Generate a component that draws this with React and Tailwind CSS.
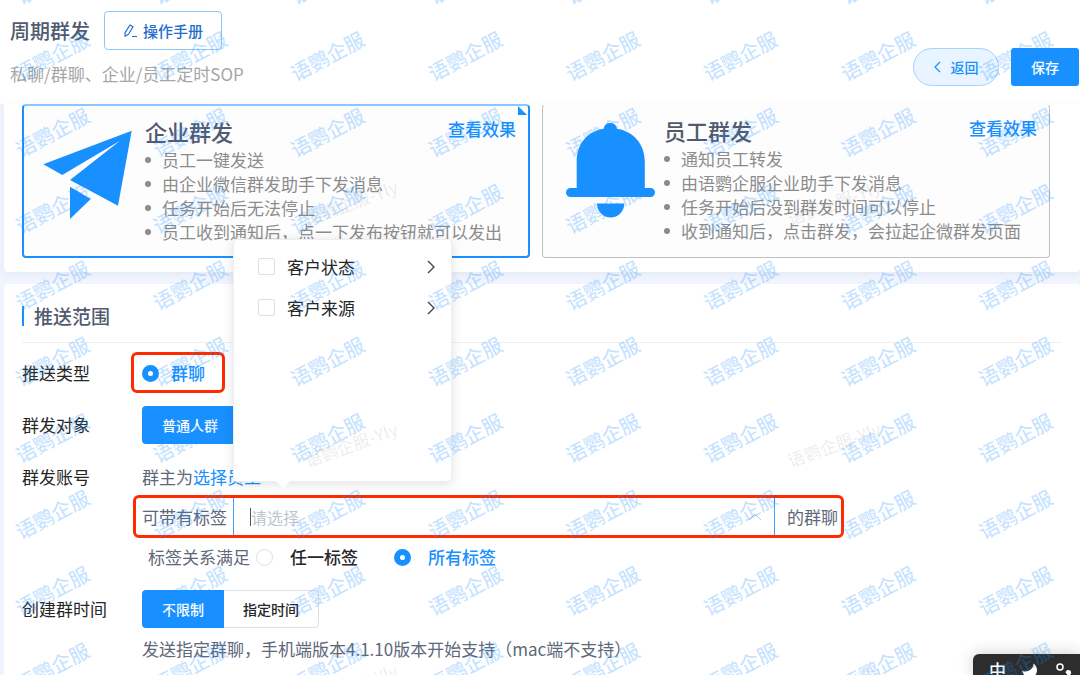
const plans = [
  {
    title: "企业群发",
    icon: "plane",
    active: true,
    points: ["员工一键发送", "由企业微信群发助手下发消息", "任务开始后无法停止", "员工收到通知后，点一下发布按钮就可以发出"],
  },
  {
    title: "员工群发",
    icon: "bell",
    active: false,
    points: ["通知员工转发", "由语鹦企服企业助手下发消息", "任务开始后没到群发时间可以停止", "收到通知后，点击群发，会拉起企微群发页面"],
  },
];

const filters = ["客户状态", "客户来源"];

function PlaneIcon() {
  return (
    <svg width="94" height="104" viewBox="0 0 94 104" className="shrink-0 fill-[#1890ff]" aria-hidden="true">
      <path d="M89.7 12.7 1.3 46.3l19 10.7L78 22.7 28 62l48 25.7z" />
      <path d="M28 68.7 48.7 81 28 101z" />
    </svg>
  );
}

function BellIcon() {
  return (
    <svg width="94" height="104" viewBox="0 0 94 104" className="shrink-0 fill-[#1890ff]" aria-hidden="true">
      <path d="M42.6 11.7a6.8 6.8 0 0 1 13.4 0C72 14 83.800 27 83.800 44v27H89.500a4.500 4.500 0 0 1 0 9H9.500a4.500 4.500 0 0 1 0-9H15.700V44c0-17 11-30 26.900-32.300z" />
      <path d="M36 86.500h27.300a13.650 14 0 0 1-27.300 0z" />
    </svg>
  );
}

function PlanCard({ plan }) {
  return (
    <section
      className={`relative flex gap-[9px] rounded bg-[#fdfdfe] pl-[18px] pr-3 py-3 ${
        plan.active ? "border-2 border-[#1890ff] border-t-[#8cc6ff]" : "border border-[#bfbfbf] border-t-transparent"
      }`}
    >
      {plan.icon === "plane" ? <PlaneIcon /> : <BellIcon />}
      <div className="flex-1 min-w-0">
        <h2 className="mb-1 text-[22px] leading-[26px] font-medium text-[#515a6e]">{plan.title}</h2>
        <ul className="text-[17px] leading-6 text-[#8c8c8c] whitespace-nowrap">
          {plan.points.map((p) => (
            <li key={p} className="flex items-center gap-[11px]">
              <span className="w-1.5 h-1.5 rounded-full bg-[#8c8c8c]" />
              {p}
            </li>
          ))}
        </ul>
      </div>
      <a href="#preview" className="absolute top-[11px] right-3 text-[17px] leading-6 font-medium text-[#1890ff]">
        查看效果
      </a>
      {plan.active && (
        <svg width="10" height="9" viewBox="0 0 10 9" className="absolute top-0 right-0 fill-[#1890ff]" aria-hidden="true">
          <path d="M0 0l9 9H0z" />
        </svg>
      )}
    </section>
  );
}

function Row({ label, children }) {
  return (
    <div className="flex">
      <div className="w-[120px] shrink-0 h-[38px] flex items-center text-[#262626]">{label}</div>
      <div className="flex-1 min-w-0 flex flex-col gap-[2px]">{children}</div>
    </div>
  );
}

function Radio({ label, name, checked, className }) {
  return (
    <label className={`flex items-center ${className}`}>
      <input
        type="radio"
        name={name}
        defaultChecked={checked}
        className="appearance-none w-[17px] h-[17px] rounded-full border border-[#dcdfe6] bg-white checked:border-[6px] checked:border-[#1890ff]"
      />
      {label}
    </label>
  );
}

function Highlight({ className }) {
  return <span className={`absolute border-[3px] border-[#ff2a00] rounded-md pointer-events-none ${className}`} />;
}

function FilterPopup() {
  return (
    <div className="absolute z-10 -left-px bottom-[54px] w-[219px] h-[243px] pt-1.5 bg-white border border-[#ebeef5] rounded-sm shadow-[0_2px_12px_rgba(0,0,0,0.12)]">
      {filters.map((f) => (
        <div key={f} className="h-[41px] pl-6 pr-4 flex items-center justify-between text-[#262626]">
          <label className="flex items-center gap-3">
            <input type="checkbox" className="appearance-none w-[17px] h-[17px] rounded-xs border border-[#dcdfe6] bg-white" />
            {f}
          </label>
          <svg width="8" height="14" viewBox="0 0 8 14" fill="none" stroke="#444" strokeWidth="1.4" aria-hidden="true">
            <path d="M1 1l6 6-6 6" />
          </svg>
        </div>
      ))}
      <svg width="14" height="7" viewBox="0 0 14 7" className="absolute top-full left-[42px] fill-white" aria-hidden="true">
        <path d="M0 0h14L7 7z" />
      </svg>
    </div>
  );
}

function Watermark() {
  const marks = [];
  for (let r = 0; r < 10; r++) {
    for (let c = 0; c < 8; c++) {
      marks.push([52 + c * 137.6, -21 + r * 76.4]);
    }
  }
  const users = [];
  for (let r = 0; r < 3; r++) {
    for (let c = 0; c < 2; c++) {
      users.push([351 + c * 483, 202 + r * 242]);
    }
  }
  return (
    <svg className="absolute inset-0 z-30 w-full h-full pointer-events-none" aria-hidden="true">
      {users.map(([x, y]) => (
        <text key={`${x}-${y}`} transform={`translate(${x} ${y}) rotate(-20)`} textAnchor="middle" dominantBaseline="central" className="text-[17px] font-medium fill-black/8">
          语鹦企服-Yly
        </text>
      ))}
      {marks.map(([x, y]) => (
        <text key={`${x}-${y}`} transform={`translate(${x} ${y}) rotate(-28)`} textAnchor="middle" dominantBaseline="central" className="text-[20px] font-medium fill-[#1890ff]/25">
          语鹦企服
        </text>
      ))}
    </svg>
  );
}

function InputMethodBar() {
  return (
    <div className="absolute z-20 right-0 bottom-0 w-[107px] h-[21px] pl-4 flex gap-4 overflow-hidden bg-[#2d2d2d] rounded-tl-md text-white shadow-[0_0_16px_rgba(0,0,0,0.2)]">
      <span className="text-[17px] leading-8 font-medium">中</span>
      <svg width="18" height="21" viewBox="0 0 18 21" className="fill-white" aria-hidden="true">
        <path d="M11.500 9.500c4 3 4.500 8 2 11.500H2l-2-4c5 1.500 11.500-1 11.500-7.500z" />
      </svg>
      <svg width="20" height="21" viewBox="0 0 20 21" aria-hidden="true">
        <circle cx="4" cy="13" r="3" fill="none" stroke="#fff" strokeWidth="1.500" />
        <path d="M9.500 18.500a2.800 2.800 0 1 1 5.500 1l-1 2h-2z" fill="#fff" />
      </svg>
    </div>
  );
}

export default function App() {
  return (
    <div className="relative h-screen overflow-hidden flex flex-col bg-[#f0f4fe] font-['Noto_Sans_CJK_SC',sans-serif] text-[17px] leading-6 text-[#606779]">
      <header className="h-[104px] shrink-0 flex items-start justify-between bg-white pl-2.5">
        <div className="pt-[11px]">
          <div className="flex items-center gap-3.5">
            <h1 className="text-[20px] font-medium text-[#515a6e]">周期群发</h1>
            <button className="h-[39px] px-[18px] flex items-center gap-1.5 border border-[#8cc6ff] rounded text-[15px] font-medium text-[#1f6fcc]">
              <svg width="14" height="14" viewBox="0 0 14 14" fill="none" stroke="currentColor" strokeWidth="1.2" strokeLinejoin="round" aria-hidden="true">
                <path d="M7 1 10 2.800 5.500 10.200 2 12.200 2.100 8.600zM9 12.500h5" />
              </svg>
              操作手册
            </button>
          </div>
          <p className="mt-3 text-[#a6a6a6]">私聊/群聊、企业/员工定时SOP</p>
        </div>
        <div className="pt-12 pr-px flex gap-3 text-[14px] font-medium">
          <button className="w-[86px] h-[38px] flex items-center justify-center gap-2.5 border border-[#a3d3ff] rounded-full bg-[#e8f4ff] text-[#1890ff]">
            <svg width="7" height="12" viewBox="0 0 7 12" fill="none" stroke="currentColor" strokeWidth="1.200" aria-hidden="true">
              <path d="M6 1 1 6l5 5" />
            </svg>
            返回
          </button>
          <button className="w-[68px] h-[38px] rounded-[3px] bg-[#1890ff] text-white">保存</button>
        </div>
      </header>

      <main className="flex-1 min-h-0 flex flex-col gap-3 pl-1">
        <div className="grid grid-cols-2 gap-3 pl-[18px] pr-[30px] pb-3.5 bg-white rounded-b shadow-[0_2px_8px_rgba(0,0,0,0.05)]">
          {plans.map((plan) => (
            <PlanCard key={plan.title} plan={plan} />
          ))}
        </div>

        <div className="flex-1 pl-[18px] pr-[18px] bg-white rounded-t">
          <div className="h-[59px] pt-1.5 flex items-center gap-2.5 border-b border-[#f0f0f0]">
            <span className="w-[2px] h-5 bg-[#1890ff]" />
            <h2 className="text-[19px] font-medium text-[#515a6e]">推送范围</h2>
          </div>

          <form className="mt-[11px] flex flex-col gap-3.5 whitespace-nowrap">
            <Row label="推送类型">
              <div className="relative w-fit h-[38px] flex">
                <Radio name="type" label="群聊" checked className="gap-3 font-medium text-[#1890ff]" />
                <Highlight className="-top-0.5 -bottom-px -left-[11px] -right-5" />
              </div>
            </Row>

            <Row label="群发对象">
              <button type="button" className="w-fit h-[38px] px-5 rounded bg-[#1890ff] text-white text-[14px] font-medium">
                普通人群
              </button>
            </Row>

            <Row label="群发账号">
              <div className="h-[38px] flex items-center">
                群主为
                <a href="#staff" className="text-[#1890ff]">选择员工</a>
              </div>
              <div className="relative w-fit h-[38px] flex items-center">
                <label htmlFor="tags">可带有标签</label>
                <div className="relative ml-1.5 w-[542px] h-[38px] pl-4 pr-3 flex items-center border-x border-[#409eff]">
                  <span className="w-px h-[18px] bg-[#555]" />
                  <input id="tags" type="text" placeholder="请选择" className="flex-1 min-w-0 text-[16px] outline-none placeholder:text-[#c0c4cc]" />
                  <svg width="14" height="8" viewBox="0 0 14 8" fill="none" stroke="#c0c4cc" aria-hidden="true">
                    <path d="M1 7l6-6 6 6" />
                  </svg>
                  <FilterPopup />
                </div>
                <span className="ml-3">的群聊</span>
                <Highlight className="-top-[3px] -bottom-0.5 -left-[9px] -right-1.5" />
              </div>
              <div className="h-[38px] pl-1.5 flex items-center">
                <span>标签关系满足</span>
                <Radio name="match" label="任一标签" className="ml-1.5 gap-[17px] font-medium text-[#262626]" />
                <Radio name="match" label="所有标签" checked className="ml-9 gap-[17px] font-medium text-[#1890ff]" />
              </div>
            </Row>

            <Row label="创建群时间">
              <div className="w-fit h-[38px] flex text-[14px] font-medium">
                <button type="button" className="px-5 rounded-l bg-[#1890ff] text-white">不限制</button>
                <button type="button" className="px-[19px] rounded-r border border-l-0 border-[#dcdfe6] text-[#262626]">指定时间</button>
              </div>
              <p className="h-[38px] flex items-center">发送指定群聊，手机端版本4.1.10版本开始支持（mac端不支持）</p>
            </Row>
          </form>
        </div>
      </main>

      <InputMethodBar />
      <Watermark />
    </div>
  );
}
